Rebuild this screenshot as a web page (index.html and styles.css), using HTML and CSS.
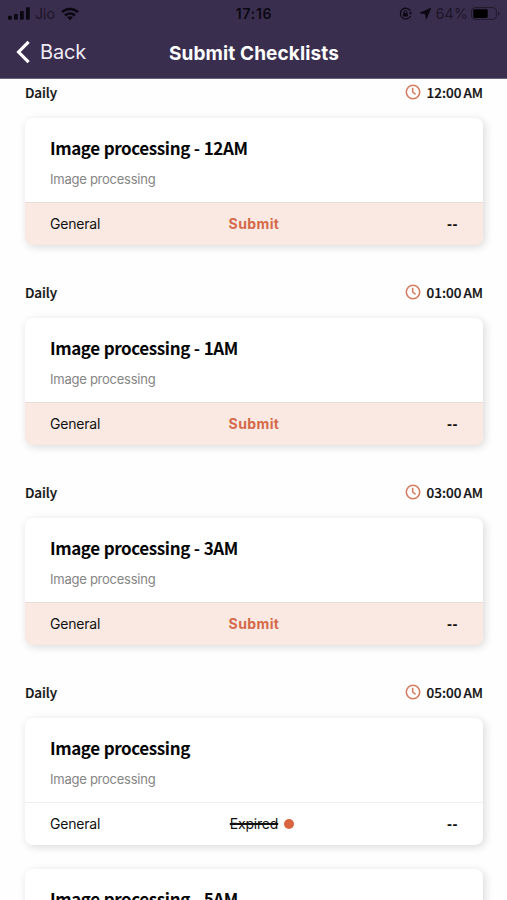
FILE: index.html
```
<!DOCTYPE html>
<html lang="en">
<head>
<meta charset="utf-8">
<title>Submit Checklists</title>
<link rel="stylesheet" href="styles.css">
</head>
<body>
<svg class="defs" width="0" height="0">
  <symbol id="clock" viewBox="0 0 16 16"><circle cx="8" cy="8" r="6.7"/><path d="M7.7 3.8V8l2.8 2.4"/></symbol>
</svg>
<header class="header">
  <div class="status">
    <div class="status-left">
      <svg width="22" height="13" viewBox="0 0 22 13"><rect x="0" y="8.8" width="3.8" height="4" rx="1"/><rect x="6" y="7" width="3.8" height="5.8" rx="1"/><rect x="12" y="3.9" width="3.8" height="8.9" rx="1"/><rect x="18" y="0.3" width="3.8" height="12.5" rx="1"/></svg>
      <span class="carrier">Jio</span>
      <svg class="wifi" width="18" height="14" viewBox="0 0 18 14"><g fill="none" stroke="#0b0812" stroke-width="2.5"><path d="M1 5.1C5.4.8 12.6.8 17 5.1"/><path d="M4 8.5c2.8-2.7 7.2-2.7 10 0"/></g><path d="M9 13.2 6 10.3c1.7-1.5 4.3-1.5 6 0z"/></svg>
    </div>
    <span class="time">17:16</span>
    <div class="status-right">
      <svg width="13" height="13" viewBox="0 0 13 13"><path d="M11.5 4A5.4 5.4 0 1 0 11.6 9" fill="none" stroke="#0b0812" stroke-width="1.2"/><path d="M9.8 5.2h3.2l-1.4 2.6z"/><rect x="4" y="6" width="4.8" height="3.5" rx=".6"/><path d="M5 6V5a1.4 1.4 0 0 1 2.8 0v1" fill="none" stroke="#0b0812"/></svg>
      <svg class="locate" width="11" height="11" viewBox="0 0 11 11"><path d="M10.8.2 6.3 10.8 5.5 5.8.2 4.9z" stroke="#0b0812" stroke-width=".8"/></svg>
      <span class="percent">64%</span>
      <svg width="29" height="13" viewBox="0 0 29 13"><rect x=".6" y=".6" width="24.8" height="11.8" rx="3.4" fill="none" stroke="#211a2e"/><rect x="2.3" y="2.2" width="14.4" height="8.7" rx="1.3" fill="#000"/><path d="M27 4.5c2 .7 2 3.3 0 4z" fill="#211a2e"/></svg>
    </div>
  </div>
  <nav class="nav">
    <a class="back"><svg width="15" height="24" viewBox="0 0 15 24"><path d="M13.6 1.8 3.6 12 13.6 22.2"/></svg><span>Back</span></a>
    <h1>Submit Checklists</h1>
  </nav>
</header>
<main class="list">
  <section class="group">
    <div class="meta"><span class="daily">Daily</span><span class="due"><svg class="clock"><use href="#clock"/></svg><span class="due-time">12:00 AM</span></span></div>
    <article class="card"><div class="body"><h2>Image processing - 12AM</h2><p>Image processing</p></div><div class="foot open"><span class="general">General</span><span class="submit">Submit</span><span class="dash">--</span></div></article>
  </section>
  <section class="group">
    <div class="meta"><span class="daily">Daily</span><span class="due"><svg class="clock"><use href="#clock"/></svg><span class="due-time">01:00 AM</span></span></div>
    <article class="card"><div class="body"><h2>Image processing - 1AM</h2><p>Image processing</p></div><div class="foot open"><span class="general">General</span><span class="submit">Submit</span><span class="dash">--</span></div></article>
  </section>
  <section class="group">
    <div class="meta"><span class="daily">Daily</span><span class="due"><svg class="clock"><use href="#clock"/></svg><span class="due-time">03:00 AM</span></span></div>
    <article class="card"><div class="body"><h2>Image processing - 3AM</h2><p>Image processing</p></div><div class="foot open"><span class="general">General</span><span class="submit">Submit</span><span class="dash">--</span></div></article>
  </section>
  <section class="group">
    <div class="meta"><span class="daily">Daily</span><span class="due"><svg class="clock"><use href="#clock"/></svg><span class="due-time">05:00 AM</span></span></div>
    <article class="card"><div class="body"><h2>Image processing</h2><p>Image processing</p></div><div class="foot"><span class="general">General</span><span class="expired"><s>Expired</s><i class="dot"></i></span><span class="dash">--</span></div></article>
    <article class="card"><div class="body"><h2>Image processing - 5AM</h2></div></article>
  </section>
</main>
</body>
</html>
```
FILE: styles.css
```
* { box-sizing: border-box; }
body {
  margin: 0;
  height: 900px;
  overflow: hidden;
  background: #fefefe;
  color: #111;
  font-family: Inter, "Liberation Sans", sans-serif;
}
h1, h2, p { margin: 0; }
svg { display: block; flex: none; }
.defs { position: absolute; }
.header {
  height: 79px;
  background: #3a2e4e;
  border-bottom: 1px solid #6c637b;
  color: #fff;
}
.status {
  display: grid;
  grid-template-columns: 1fr auto 1fr;
  align-items: center;
  height: 27px;
  padding: 0 7px 0 8px;
  color: #0b0812;
  fill: #0b0812;
  font-size: 14px;
}
.status-left, .status-right { display: flex; align-items: center; }
.status-right { justify-content: flex-end; }
.carrier { margin-left: 5px; letter-spacing: .1px; color: #1c1528; }
.wifi { margin-left: 6px; }
.time { font-weight: 600; letter-spacing: .7px; }
.locate { margin-left: 8px; }
.percent { margin: 0 3px 0 5px; letter-spacing: .3px; color: #1c1528; }
.nav {
  display: grid;
  grid-template-columns: 1fr auto 1fr;
  align-items: center;
  height: 51px;
  padding: 0 15px;
}
.back {
  display: flex;
  align-items: center;
  gap: 10px;
  font-size: 20px;
  line-height: 24px;
  letter-spacing: -.15px;
  color: #eeeaf3;
}
.back svg { margin-top: -1px; }
.back span { margin-top: -1px; }
.back path { fill: none; stroke: #fff; stroke-width: 3.2; }
h1 { padding: 2px 0 0 1px; font-size: 19px; font-weight: 700; line-height: 24px; letter-spacing: .12px; }
.list { padding: 0 25px; }
.group { margin-bottom: 34px; }
.meta {
  display: flex;
  align-items: center;
  justify-content: space-between;
  height: 27px;
  margin: 0 -1px 12px 0;
  font: 500 13.5px/27px "Noto Sans CJK JP", sans-serif;
  -webkit-text-stroke: .2px currentColor;
}
.daily { letter-spacing: -.1px; }
.due { display: flex; align-items: center; gap: 6px; }
.due-time { letter-spacing: 0; word-spacing: -1px; }
.clock { width: 16px; height: 16px; margin-top: -1px; fill: none; stroke: #d67d63; stroke-width: 1.6; }
.card {
  height: 127px;
  margin-right: -1px;
  margin-bottom: 24px;
  border-radius: 8px;
  background: #fff;
  box-shadow: 2px 2px 9px rgba(0, 0, 0, .15);
  overflow: hidden;
}
.body { height: 84px; padding: 17px 25px 0; }
h2 { font: 700 17px/26px "Noto Sans CJK JP", sans-serif; letter-spacing: -.4px; word-spacing: .5px; color: #050505; }
p { margin-top: 9px; font-size: 13px; line-height: 18px; letter-spacing: -.25px; color: #858585; }
.foot {
  display: grid;
  grid-template-columns: 1fr auto 1fr;
  align-items: center;
  height: 43px;
  padding: 0 25px 1px;
  border-top: 1px solid #eee;
  font-size: 14px;
}
.general { letter-spacing: -.2px; }
.open { background: #f9e9e2; border-top-color: #eadcd8; }
.submit { color: #d4694a; font-weight: 700; letter-spacing: .4px; }
.dash { justify-self: end; font: 700 15px "Liberation Sans", sans-serif; letter-spacing: .5px; }
.expired { display: flex; align-items: center; letter-spacing: -.2px; }
.expired s { text-decoration-thickness: 2px; }
.dot { width: 10px; height: 10px; margin: 0 -16px 0 6px; border-radius: 50%; background: #d96540; }
```
